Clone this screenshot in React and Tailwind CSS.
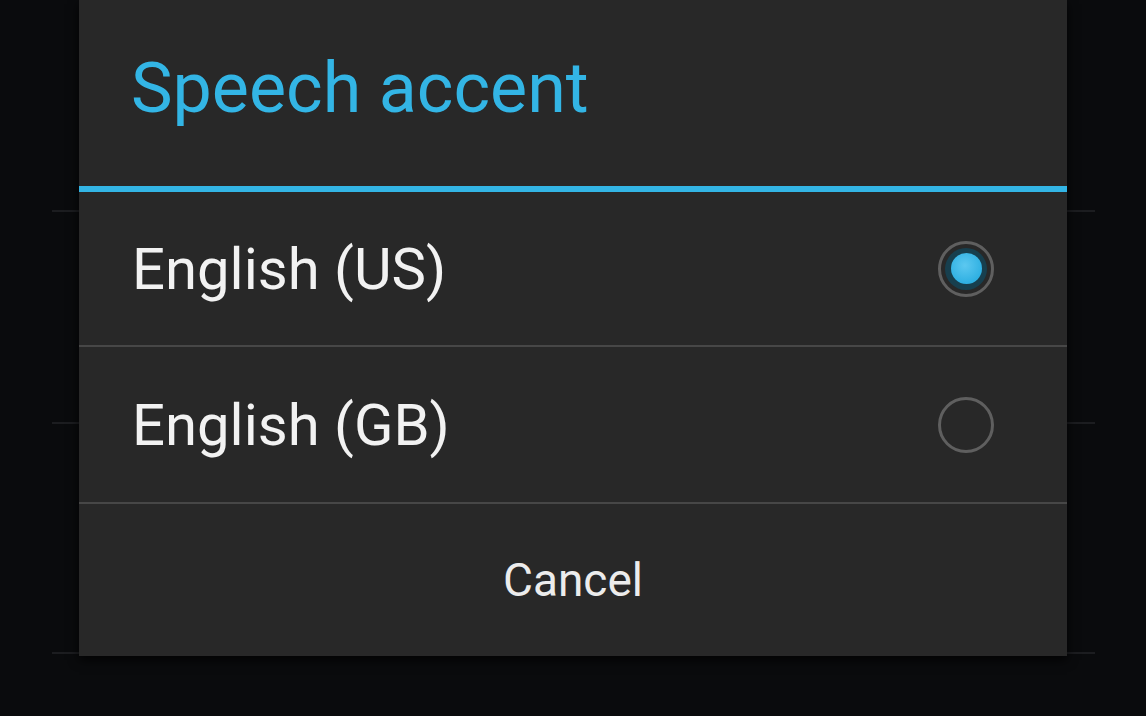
import React from "react";

function Radio({ checked }) {
  return (
    <div className="relative w-[56px] h-[56px] rounded-full border-[3px] border-[#5f5f5f] flex items-center justify-center">
      {checked && (
        <div className="w-[42px] h-[42px] rounded-full bg-[#173f4e] flex items-center justify-center">
          <div className="w-[31px] h-[31px] rounded-full bg-[radial-gradient(circle_at_45%_40%,#5cc8f0,#2fb0e2_70%)]" />
        </div>
      )}
    </div>
  );
}

export default function App() {
  return (
    <div
      className="relative w-[1146px] h-[716px] overflow-hidden bg-[#0a0b0d]"
      style={{ fontFamily: "Roboto, 'Noto Sans', sans-serif" }}
    >
      {/* background settings list */}
      <div className="flex flex-col pl-[52px] pr-[51px]">
        <div className="h-[212px] border-b-2 border-[#1c1d20]" />
        <div className="h-[212px] border-b-2 border-[#1c1d20]" />
        <div className="h-[230px] border-b-2 border-[#1c1d20]" />
      </div>

      {/* dialog */}
      <div className="absolute left-[79px] top-0 w-[988px] bg-[#282828] shadow-[0_4px_10px_rgba(0,0,0,0.8)]">
        <div className="h-[186px] flex items-center pl-[52px] pb-[10px]">
          <span className="text-[70px] leading-none text-[#33b5e5]">Speech accent</span>
        </div>
        <div className="h-[6px] bg-[#33b5e5]" />
        <div className="h-[155px] flex items-center justify-between pl-[53px] pr-[73px] border-b-2 border-[#474747]">
          <span className="text-[58px] leading-none text-[#f2f2f2]">English (US)</span>
          <Radio checked />
        </div>
        <div className="h-[157px] flex items-center justify-between pl-[53px] pr-[73px] border-b-2 border-[#474747]">
          <span className="text-[58px] leading-none text-[#f2f2f2]">English (GB)</span>
          <Radio />
        </div>
        <div className="h-[152px] flex items-center justify-center">
          <span className="text-[46px] leading-none text-[#ececec]">Cancel</span>
        </div>
      </div>
    </div>
  );
}
